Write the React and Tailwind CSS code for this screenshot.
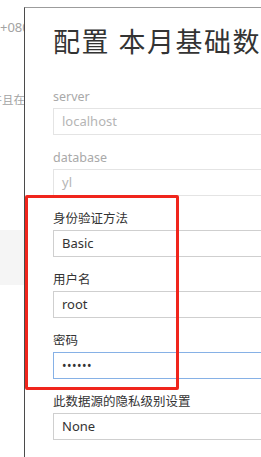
import React from 'react'

const font = { fontFamily: '"Noto Sans", "Noto Sans CJK SC", sans-serif' }

const Field = ({ label, value, disabled, focused, password, first }) => (
  <div className={first ? 'mt-[31px]' : 'mt-[15px]'}>
    <div className={`h-4 text-[12.5px] leading-4 whitespace-nowrap ${disabled ? 'text-[#a9a9a9]' : 'text-[#333]'}`}>{label}</div>
    <div
      className={`mt-[3px] h-[27px] w-[320px] border flex items-center pl-2 text-[13px] ${
        focused ? 'border-[#86b1e6]' : disabled ? 'border-[#e4e4e4]' : 'border-[#cfcfcf]'
      } ${disabled ? 'text-[#b5b5b5]' : 'text-[#333]'}`}
    >
      {password ? <span className="tracking-[0.5px] text-[12px]">••••••</span> : value}
    </div>
  </div>
)

export default function App() {
  return (
    <div className="relative w-[261px] h-[457px] overflow-hidden bg-white flex" style={font}>
      <div className="w-[24px] shrink-0 overflow-hidden text-[#a3a3a3]">
        <div className="mt-[19px] h-4 text-[13px] leading-4 whitespace-nowrap">+0800</div>
        <div className="mt-[57px] h-4 flex justify-end">
          <span className="text-[11.5px] leading-4 whitespace-nowrap mr-[-1px]">并且在</span>
        </div>
        <div className="mt-[122px] h-[55px] bg-[#f5f5f5]" />
      </div>

      <div className="flex-1 min-w-0 mt-[7px] border-l border-t border-l-[#4b4b4b] border-t-[#9c9c9c] pl-[28px]">
        <h1 className="pt-[18px] text-[27px] tracking-[1.5px] leading-8 text-[#333] whitespace-nowrap">配置 本月基础数据</h1>
        <Field first label="server" value="localhost" disabled />
        <Field label="database" value="yl" disabled />
        <Field label="身份验证方法" value="Basic" />
        <Field label="用户名" value="root" />
        <Field label="密码" password focused />
        <Field label="此数据源的隐私级别设置" value="None" />
      </div>

      <div className="absolute left-[25px] top-[195px] w-[154px] h-[195px] border-[3px] border-[#f0251c] rounded-[2px]" />
    </div>
  )
}
